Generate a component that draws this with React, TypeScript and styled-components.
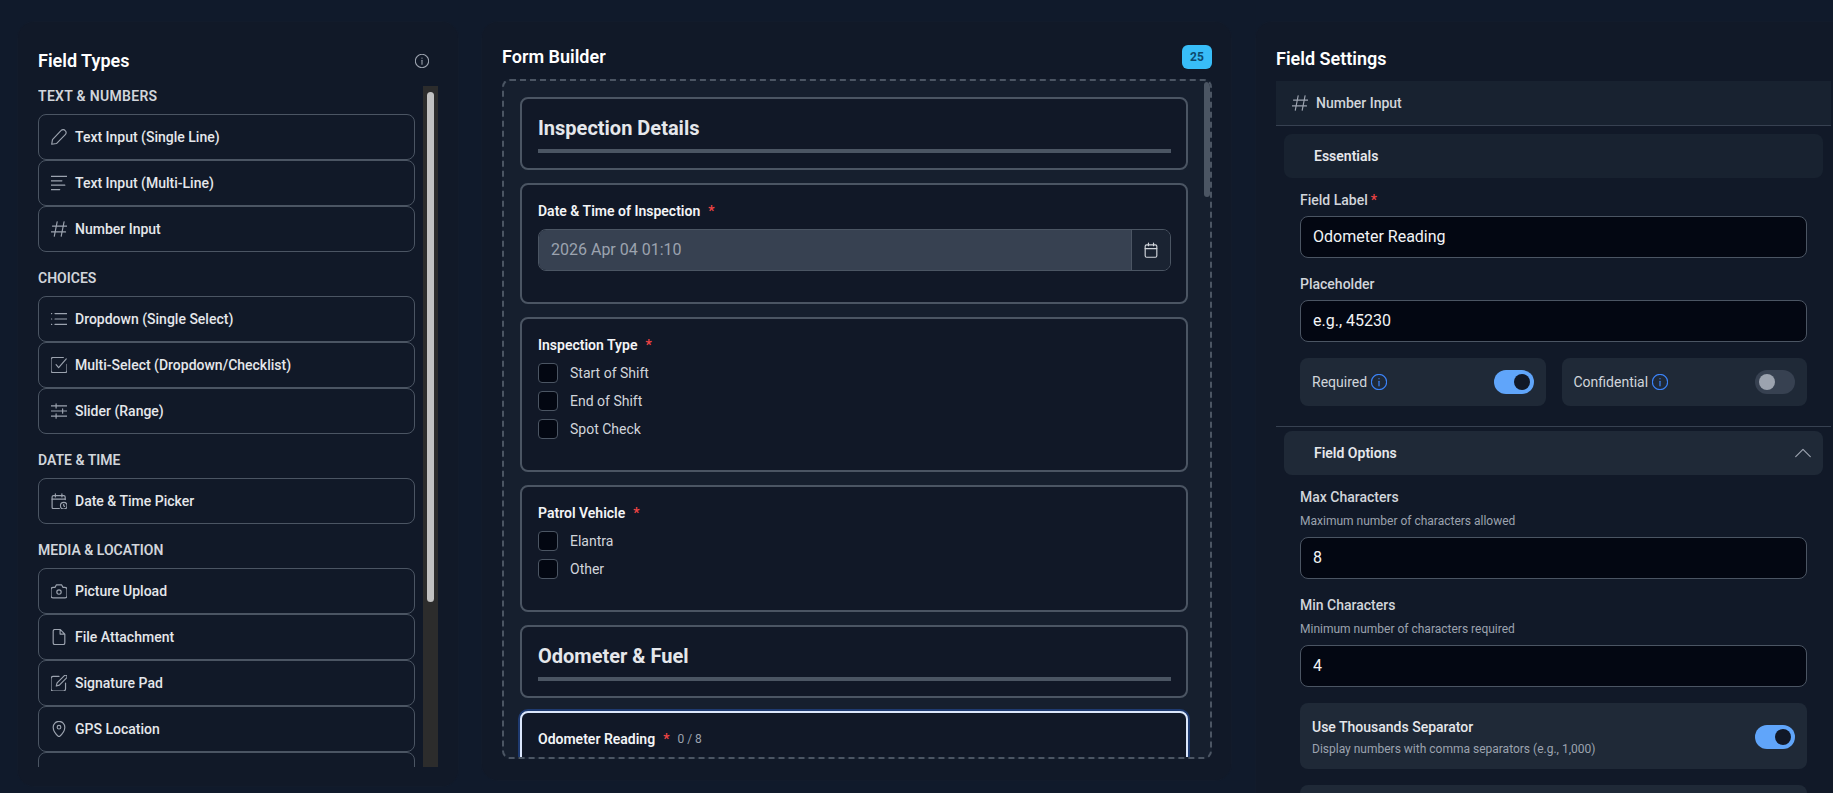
import React from "react";
import styled, { createGlobalStyle } from "styled-components";

const Global = createGlobalStyle`
  html, body { margin: 0; padding: 0; height: 100%; overflow: hidden; background: #101a2b; }
  #root { height: 100%; }
  * { box-sizing: border-box; }
  body { font-family: Roboto, "Liberation Sans", sans-serif; color: #e5e7eb; }
`;

const Page = styled.div`
  display: flex;
  align-items: flex-start;
  height: 793px;
  padding: 22px 0 0 18px;
  overflow: hidden;
`;

const Panel = styled.section<{ $w?: number; $h: number }>`
  flex: ${(p) => (p.$w ? `0 0 ${p.$w}px` : "1 1 0")};
  height: ${(p) => p.$h}px;
  background: #111928;
  border-radius: 16px;
  box-shadow: 0 0 0 1px #121b2b;
  min-width: 0;
`;

const LeftPanel = styled(Panel)`
  padding: 29px 20px 0;
`;
const MiddlePanel = styled(Panel)`
  margin-left: 24px;
  padding: 23px 19px 0 20px;
`;
const RightPanel = styled(Panel)`
  margin-left: 25px;
  padding: 25px 2px 0 20px;
  overflow: hidden;
  border-radius: 16px 0 0 0;
`;

const PanelHead = styled.div`
  display: flex;
  align-items: center;
  justify-content: space-between;
`;
const LeftHead = styled(PanelHead)`
  height: 20px;
  padding-right: 9px;
  margin-bottom: 15px;
`;
const MiddleHead = styled(PanelHead)`
  height: 24px;
  margin-bottom: 10px;
`;
const Title = styled.h2`
  margin: 0;
  font-size: 18px;
  line-height: 24px;
  font-weight: 600;
  color: #fff;
`;
const RightTitle = styled(Title)`
  margin-bottom: 10px;
`;
const Badge = styled.span`
  display: flex;
  align-items: center;
  justify-content: center;
  width: 30px;
  height: 24px;
  border-radius: 6px;
  background: #38bdf8;
  color: #0c4a6e;
  font-size: 12px;
  font-weight: 700;
`;

const TypeViewport = styled.div`
  display: flex;
  height: 681px;
  width: 400px;
`;
const TypeList = styled.div`
  flex: 1;
  min-width: 0;
  padding-right: 8px;
  overflow: hidden;
`;
const ScrollTrack = styled.div`
  flex: 0 0 15px;
  padding: 6px 4px 0;
  background: #2c2c2c;
`;
const ScrollThumb = styled.div`
  height: 510px;
  border-radius: 4px;
  background: #c1c1c1;
`;
const Group = styled.div`
  margin-bottom: 16px;
`;
const GroupName = styled.div<{ $tracking?: number }>`
  font-size: 14px;
  line-height: 20px;
  font-weight: 600;
  color: #d1d5db;
  text-transform: uppercase;
  letter-spacing: ${(p) => p.$tracking ?? 0}px;
  margin-bottom: 8px;
`;
const TypeItem = styled.div`
  display: flex;
  align-items: center;
  gap: 8px;
  height: 46px;
  padding: 0 12px;
  border: 1px solid #4b5563;
  border-radius: 8px;
  font-size: 14px;
  font-weight: 500;
  color: #e5e7eb;
`;

const DropBox = styled.div`
  position: relative;
  height: 680px;
  border: 2px dashed #4b5563;
  border-radius: 8px;
  background: #161f2e;
  overflow: hidden;
`;
const DropThumb = styled.div`
  position: absolute;
  top: 1px;
  right: 0;
  width: 6px;
  height: 115px;
  border-radius: 4px;
  background: #4b5563;
`;
const DropContent = styled.div`
  display: flex;
  flex-direction: column;
  gap: 13px;
  padding: 16px 22px 16px 16px;
`;
const Card = styled.div<{ $selected?: boolean }>`
  padding: 16px 15px 31px 16px;
  border: 2px solid ${(p) => (p.$selected ? "#dbe6fb" : "#4b5563")};
  border-radius: 8px;
  background: #111827;
  box-shadow: ${(p) => (p.$selected ? "0 0 0 2px #1e3a70" : "none")};
`;
const SectionCard = styled(Card)`
  padding: 15px 15px 16px 16px;
  height: 73px;
`;
const SectionTitle = styled.h3`
  margin: 0;
  font-size: 20px;
  line-height: 28px;
  font-weight: 700;
  color: #e5e7eb;
`;
const Rule = styled.div`
  height: 4px;
  margin-top: 7px;
  background: #4b5563;
`;
const CardLabel = styled.div`
  display: flex;
  align-items: center;
  height: 20px;
  margin-bottom: 8px;
  font-size: 14px;
  font-weight: 600;
  color: #f3f4f6;
`;
const Star = styled.span`
  color: #ef4444;
  margin-left: 8px;
`;
const Count = styled.span`
  margin-left: 8px;
  font-size: 12px;
  font-weight: 400;
  color: #9ca3af;
`;
const DateGroup = styled.div`
  display: flex;
  height: 41.5px;
  margin-bottom: 0.5px;
  border: 1px solid #4b5563;
  border-radius: 8px;
  overflow: hidden;
`;
const DateValue = styled.div`
  flex: 1;
  display: flex;
  align-items: center;
  padding-left: 12px;
  background: #374151;
  font-size: 16px;
  color: #9ca3af;
`;
const DateAddon = styled.div`
  flex: 0 0 39px;
  display: flex;
  align-items: center;
  justify-content: center;
  border-left: 1px solid #4b5563;
  background: #1a2332;
`;
const Options = styled.div`
  display: flex;
  flex-direction: column;
  gap: 8px;
`;
const OptionRow = styled.label`
  display: flex;
  align-items: center;
  gap: 12px;
  height: 20px;
  font-size: 14px;
  color: #d1d5db;
`;
const Check = styled.span`
  flex: 0 0 20px;
  height: 20px;
  border: 1px solid #4b5563;
  border-radius: 4px;
  background: #030712;
`;

const FieldBar = styled.div`
  display: flex;
  align-items: center;
  gap: 8px;
  height: 45px;
  padding: 0 16px;
  background: #182230;
  border-bottom: 1px solid #374151;
  font-size: 14px;
  font-weight: 500;
  color: #d1d5db;
`;
const Accordion = styled.div<{ $open?: boolean }>`
  display: flex;
  align-items: center;
  justify-content: space-between;
  height: 44px;
  margin: 0 8px;
  padding: 0 12px 0 30px;
  border-radius: 8px;
  background: ${(p) => (p.$open ? "#1f2937" : "#182230")};
  font-size: 14px;
  font-weight: 600;
  color: #e5e7eb;
`;
const EssentialsWrap = styled.div`
  margin-top: 8px;
`;
const SectionBody = styled.div`
  padding: 12px 24px 0;
`;
const FieldBlock = styled.div`
  margin-bottom: 16.5px;
`;
const FieldLabel = styled.div`
  font-size: 14px;
  line-height: 20px;
  font-weight: 500;
  color: #d1d5db;
  margin-bottom: 6px;
`;
const LabelStar = styled.span`
  color: #ef4444;
  margin-left: 3px;
`;
const FieldHint = styled.div`
  font-size: 12px;
  line-height: 16px;
  color: #9ca3af;
  margin-bottom: 8px;
`;
const TextInput = styled.input`
  display: block;
  width: 100%;
  height: 41.5px;
  padding: 0 12px;
  border: 1px solid #4b5563;
  border-radius: 8px;
  background: #030712;
  color: #f3f4f6;
  font: 400 16px Roboto, sans-serif;
  outline: none;
`;
const ToggleGrid = styled.div`
  display: grid;
  grid-template-columns: 1fr 1fr;
  gap: 16px;
`;
const ToggleCard = styled.div`
  display: flex;
  align-items: center;
  justify-content: space-between;
  height: 48px;
  padding: 0 12px;
  border-radius: 8px;
  background: #1f2937;
`;
const ToggleLabel = styled.div`
  display: flex;
  align-items: center;
  gap: 4px;
  font-size: 14px;
  color: #d1d5db;
`;
const Toggle = styled.span<{ $on?: boolean }>`
  display: flex;
  align-items: center;
  justify-content: ${(p) => (p.$on ? "flex-end" : "flex-start")};
  width: 40px;
  height: 24px;
  padding: 0 4px;
  border-radius: 12px;
  background: ${(p) => (p.$on ? "#60a5fa" : "#374151")};
  &::after {
    content: "";
    width: 16px;
    height: 16px;
    border-radius: 50%;
    background: ${(p) => (p.$on ? "#111827" : "#9ca3af")};
  }
`;
const Divider = styled.div`
  height: 1px;
  margin: 20px 0 4px;
  background: #374151;
`;
const WideToggle = styled(ToggleCard)`
  height: 66px;
  padding-top: 2px;
  margin-bottom: 16px;
`;
const WideTitle = styled.div`
  font-size: 14px;
  line-height: 20px;
  font-weight: 500;
  color: #e5e7eb;
  margin-bottom: 4px;
`;
const WideHint = styled.div`
  font-size: 12px;
  line-height: 16px;
  color: #9ca3af;
`;
const BlankCard = styled.div`
  height: 66px;
  border-radius: 8px;
  background: #1f2937;
`;

const Svg = styled.svg<{ $size?: number; $color?: string }>`
  flex: 0 0 auto;
  width: ${(p) => p.$size ?? 16}px;
  height: ${(p) => p.$size ?? 16}px;
  fill: none;
  stroke: ${(p) => p.$color ?? "#9ca3af"};
  stroke-width: 1.6;
  stroke-linecap: round;
  stroke-linejoin: round;
`;

type IconProps = { size?: number; color?: string };
const make = (body: React.ReactNode, vb = "1 1 22 22") => ({ size, color }: IconProps) => (
  <Svg viewBox={vb} $size={size} $color={color}>{body}</Svg>
);

const PencilIcon = make(<path d="M2 22l1-6.500L15 3a3.600 3.600 0 0 1 5.500.2l.3.3a3.600 3.600 0 0 1-.2 5.200L8.500 21z" />);
const LinesIcon = make(<path d="M1 3h22M1 9h15M1 15h19M1 21h12" />);
const HashIcon = make(<path d="M9.500 2L5.500 22M19 2l-4 20M3 8h20M1 16h20" />);
const ListIcon = make(<><path d="M6.500 4.500h16.500M6.500 12h16.500M6.500 19.500h16.500" /><path d="M1.500 4.500h.5M1.500 12h.5M1.500 19.500h.5" /></>);
const CheckIcon = make(<><path d="M23 11v8.500a3 3 0 0 1-3 3H4a3 3 0 0 1-3-3V4.500a3 3 0 0 1 3-3h14" /><path d="M8 11.500l3.500 4L22 3.500" /></>);
const SlidersIcon = make(<path d="M1 5h22M1 12h22M1 19h22M8 2v6M17 9v6M8 16v6" />);
const CalClockIcon = make(<><path d="M20.500 10V6.500a2 2 0 0 0-2-2h-14a2 2 0 0 0-2 2v14a2 2 0 0 0 2 2h8" /><path d="M2.500 9.500h18M7 2v4.500M16 2v4.500" /><circle cx="18.500" cy="18.500" r="4.500" /><path d="M18.500 16.500v2l1.200 1" /></>);
const CameraIcon = make(<><path d="M1 10a3 3 0 0 1 3-3h2.500l2-3.500h7l2 3.500H20a3 3 0 0 1 3 3v8.500a3 3 0 0 1-3 3H4a3 3 0 0 1-3-3z" /><circle cx="12" cy="13.500" r="3" /></>);
const FileIcon = make(<path d="M13.500 1.500H6.500a2.500 2.500 0 0 0-2.500 2.500v16a2.500 2.500 0 0 0 2.500 2.500h11a2.500 2.500 0 0 0 2.500-2.500V8zM13.500 1.500V8H20" />);
const PenBoxIcon = make(<><path d="M12 3H4a3 3 0 0 0-3 3v14a3 3 0 0 0 3 3h14a3 3 0 0 0 3-3v-8" /><path d="M19.400 1.800a2.200 2.200 0 0 1 3.100 3.100L12.500 15l-4.300 1.200 1.200-4.300z" /></>);
const PinIcon = make(<><path d="M12 23s8-7 8-13.500a8 8 0 0 0-16 0C4 16 12 23 12 23z" /><circle cx="12" cy="9.500" r="2.500" /></>);
const CalendarIcon = make(<><rect x="4" y="5" width="16" height="17" rx="2" /><path d="M4 10h16M8.500 2.500V6M15.500 2.500V6" /></>);
const InfoIcon = make(<><circle cx="12" cy="12" r="10" /><path d="M12 11v6" /><path d="M12 7.500v.2" /></>, "1.500 1.500 21 21");
const ChevronIcon = make(<path d="M2 17L12 7l10 10" />);

type TypeDef = [React.ComponentType<IconProps>, string];
const groups: { name: string; tracking?: number; items: TypeDef[] }[] = [
  { name: "Text & Numbers", tracking: 0.3, items: [[PencilIcon, "Text Input (Single Line)"], [LinesIcon, "Text Input (Multi-Line)"], [HashIcon, "Number Input"]] },
  { name: "Choices", items: [[ListIcon, "Dropdown (Single Select)"], [CheckIcon, "Multi-Select (Dropdown/Checklist)"], [SlidersIcon, "Slider (Range)"]] },
  { name: "Date & Time", items: [[CalClockIcon, "Date & Time Picker"]] },
  { name: "Media & Location", items: [[CameraIcon, "Picture Upload"], [FileIcon, "File Attachment"], [PenBoxIcon, "Signature Pad"], [PinIcon, "GPS Location"]] },
];

const QuestionCard = ({ label, options }: { label: string; options: string[] }) => (
  <Card>
    <CardLabel>{label}<Star>*</Star></CardLabel>
    <Options>
      {options.map((o) => (
        <OptionRow key={o}><Check />{o}</OptionRow>
      ))}
    </Options>
  </Card>
);

export default function App() {
  return (
    <>
      <Global />
      <Page>
        <LeftPanel $w={440} $h={764}>
          <LeftHead>
            <Title>Field Types</Title>
            <InfoIcon size={14} />
          </LeftHead>
          <TypeViewport>
            <TypeList>
              {groups.map((g) => (
                <Group key={g.name}>
                  <GroupName $tracking={g.tracking}>{g.name}</GroupName>
                  {g.items.map(([Icon, text]) => (
                    <TypeItem key={text}><Icon />{text}</TypeItem>
                  ))}
                  {g.name === "Media & Location" && <TypeItem />}
                </Group>
              ))}
            </TypeList>
            <ScrollTrack><ScrollThumb /></ScrollTrack>
          </TypeViewport>
        </LeftPanel>

        <MiddlePanel $w={749} $h={758}>
          <MiddleHead>
            <Title>Form Builder</Title>
            <Badge>25</Badge>
          </MiddleHead>
          <DropBox>
            <DropContent>
              <SectionCard>
                <SectionTitle>Inspection Details</SectionTitle>
                <Rule />
              </SectionCard>
              <Card>
                <CardLabel>Date &amp; Time of Inspection<Star>*</Star></CardLabel>
                <DateGroup>
                  <DateValue>2026 Apr 04 01:10</DateValue>
                  <DateAddon><CalendarIcon color="#d1d5db" /></DateAddon>
                </DateGroup>
              </Card>
              <QuestionCard label="Inspection Type" options={["Start of Shift", "End of Shift", "Spot Check"]} />
              <QuestionCard label="Patrol Vehicle" options={["Elantra", "Other"]} />
              <SectionCard>
                <SectionTitle>Odometer &amp; Fuel</SectionTitle>
                <Rule />
              </SectionCard>
              <Card $selected>
                <CardLabel>Odometer Reading<Star>*</Star><Count>0 / 8</Count></CardLabel>
                <TextInput readOnly value="" />
              </Card>
            </DropContent>
            <DropThumb />
          </DropBox>
        </MiddlePanel>

        <RightPanel $h={771}>
          <RightTitle>Field Settings</RightTitle>
          <FieldBar><HashIcon />Number Input</FieldBar>
          <EssentialsWrap>
            <Accordion>Essentials</Accordion>
          </EssentialsWrap>
          <SectionBody>
            <FieldBlock>
              <FieldLabel>Field Label<LabelStar>*</LabelStar></FieldLabel>
              <TextInput readOnly value="Odometer Reading" />
            </FieldBlock>
            <FieldBlock>
              <FieldLabel>Placeholder</FieldLabel>
              <TextInput readOnly value="e.g., 45230" />
            </FieldBlock>
            <ToggleGrid>
              <ToggleCard>
                <ToggleLabel>Required<InfoIcon color="#3b82f6" /></ToggleLabel>
                <Toggle $on />
              </ToggleCard>
              <ToggleCard>
                <ToggleLabel>Confidential<InfoIcon color="#3b82f6" /></ToggleLabel>
                <Toggle />
              </ToggleCard>
            </ToggleGrid>
          </SectionBody>
          <Divider />
          <Accordion $open>Field Options<ChevronIcon /></Accordion>
          <SectionBody>
            <FieldBlock>
              <FieldLabel>Max Characters</FieldLabel>
              <FieldHint>Maximum number of characters allowed</FieldHint>
              <TextInput readOnly value="8" />
            </FieldBlock>
            <FieldBlock>
              <FieldLabel>Min Characters</FieldLabel>
              <FieldHint>Minimum number of characters required</FieldHint>
              <TextInput readOnly value="4" />
            </FieldBlock>
            <WideToggle>
              <div>
                <WideTitle>Use Thousands Separator</WideTitle>
                <WideHint>Display numbers with comma separators (e.g., 1,000)</WideHint>
              </div>
              <Toggle $on />
            </WideToggle>
            <BlankCard />
          </SectionBody>
        </RightPanel>
      </Page>
    </>
  );
}
